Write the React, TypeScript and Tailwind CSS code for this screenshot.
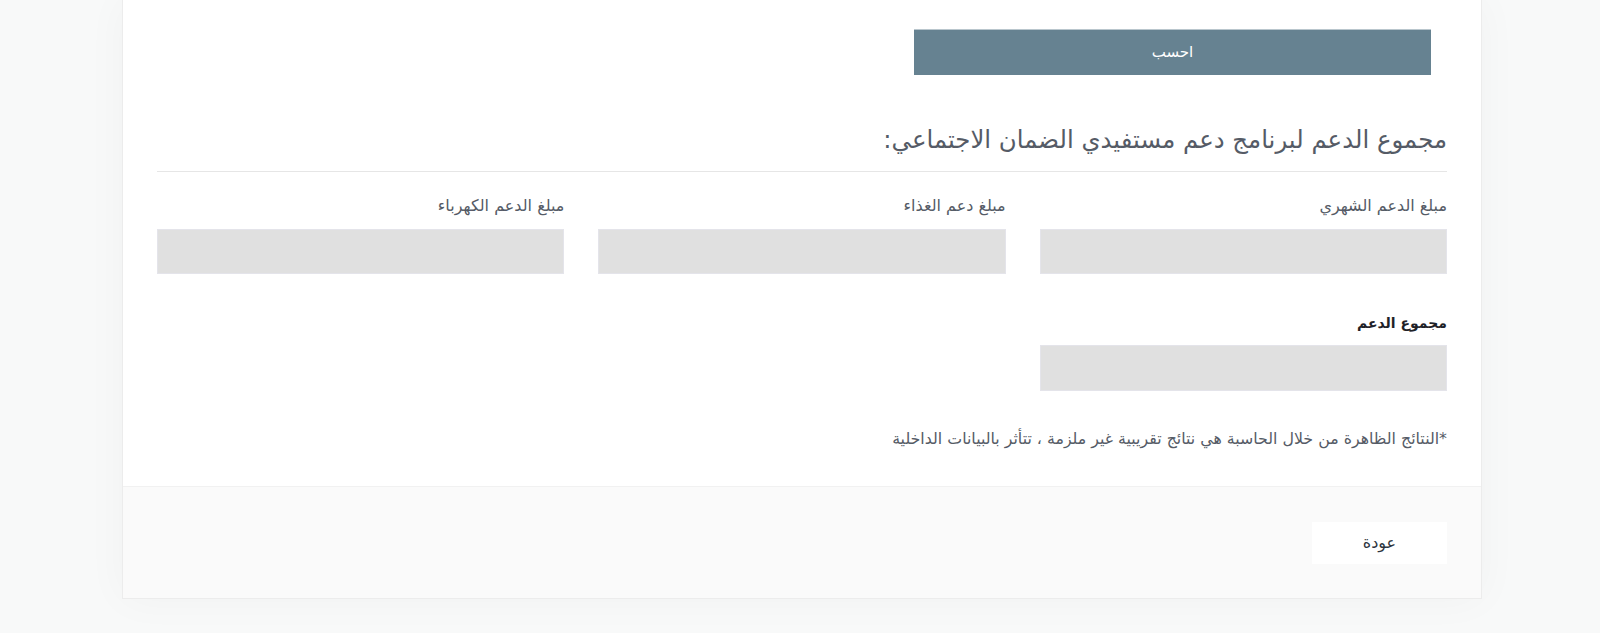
const fields = [
  { id: "monthly", label: "مبلغ الدعم الشهري" },
  { id: "food", label: "مبلغ دعم الغذاء" },
  { id: "power", label: "مبلغ الدعم الكهرباء" },
];

const font = { fontFamily: '"DejaVu Sans", "Noto Sans", sans-serif' };

export default function App() {
  return (
    <div dir="rtl" className="min-h-[633px] bg-[#f8f9f9] pl-[122px] pr-[118px] pb-[35px]" style={font}>
      <div className="border border-t-0 border-[#ececec] bg-white shadow-[0_0_40px_rgba(0,0,0,0.035)]">
        <div className="px-[34px] pt-[29px] pb-[37px]">
          <div className="flex">
            <button className="mr-[16px] h-[46px] w-[517px] border-t border-[#b9c6cd] bg-[#668291] text-[15px] text-white">
              احسب
            </button>
          </div>

          <h2 className="mt-[48px] pb-[14px] text-[24.4px] leading-[34px] text-[#555b66] border-b border-[#e6e6e6]">
            مجموع الدعم لبرنامج دعم مستفيدي الضمان الاجتماعي:
          </h2>

          <div className="mt-[24px] grid grid-cols-3 gap-x-[34px]">
            {fields.map(({ id, label }) => (
              <div key={id}>
                <label className="block text-[16px] leading-[20px] text-[#555b66]">{label}</label>
                <div className="mt-[13px] h-[45px] border border-[#e4e4ea] bg-[#e0e0e0]" />
              </div>
            ))}
          </div>

          <div className="mt-[39px] grid grid-cols-3 gap-x-[34px]">
            <div>
              <label className="block text-[14px] font-bold leading-[20px] text-[#1f2228]">مجموع الدعم</label>
              <div className="mt-[12px] h-[46px] border border-[#e4e4ea] bg-[#e0e0e0]" />
            </div>
          </div>

          <p className="mt-[38px] text-[15.8px] leading-[20px] text-[#555b66]">
            *النتائج الظاهرة من خلال الحاسبة هي نتائج تقريبية غير ملزمة ، تتأثر بالبيانات الداخلية
          </p>
        </div>

        <div className="border-t border-[#f1f1f1] bg-[#fafafa] px-[34px] pt-[35px] pb-[34px]">
          <button className="h-[42px] w-[135px] bg-white text-[16px] text-[#2c3440]">عودة</button>
        </div>
      </div>
    </div>
  );
}
